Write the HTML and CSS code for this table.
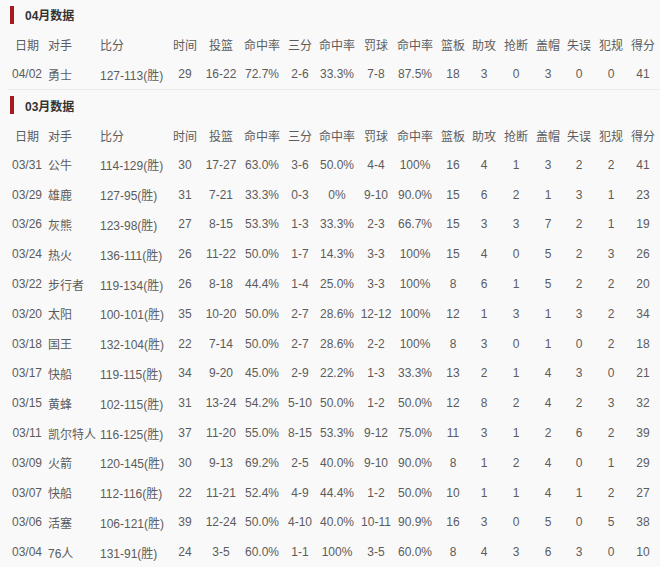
FILE: index.html
```html
<!DOCTYPE html>
<html lang="zh-CN">
<head>
<meta charset="utf-8">
<title>月度数据</title>
<link rel="stylesheet" href="styles.css">
</head>
<body>
<div class="page">
  <section class="month">
    <h2 class="month-title">04月数据</h2>
    <div class="stats">
      <div class="row head"><span>日期</span><span class="l">对手</span><span class="l">比分</span><span>时间</span><span>投篮</span><span>命中率</span><span>三分</span><span>命中率</span><span>罚球</span><span>命中率</span><span>篮板</span><span>助攻</span><span>抢断</span><span>盖帽</span><span>失误</span><span>犯规</span><span>得分</span></div>
      <div class="row"><span>04/02</span><span class="l">勇士</span><span class="l">127-113(胜)</span><span>29</span><span>16-22</span><span>72.7%</span><span>2-6</span><span>33.3%</span><span>7-8</span><span>87.5%</span><span>18</span><span>3</span><span>0</span><span>3</span><span>0</span><span>0</span><span>41</span></div>
    </div>
  </section>
  <section class="month">
    <h2 class="month-title">03月数据</h2>
    <div class="stats">
      <div class="row head"><span>日期</span><span class="l">对手</span><span class="l">比分</span><span>时间</span><span>投篮</span><span>命中率</span><span>三分</span><span>命中率</span><span>罚球</span><span>命中率</span><span>篮板</span><span>助攻</span><span>抢断</span><span>盖帽</span><span>失误</span><span>犯规</span><span>得分</span></div>
      <div class="row"><span>03/31</span><span class="l">公牛</span><span class="l">114-129(胜)</span><span>30</span><span>17-27</span><span>63.0%</span><span>3-6</span><span>50.0%</span><span>4-4</span><span>100%</span><span>16</span><span>4</span><span>1</span><span>3</span><span>2</span><span>2</span><span>41</span></div>
      <div class="row"><span>03/29</span><span class="l">雄鹿</span><span class="l">127-95(胜)</span><span>31</span><span>7-21</span><span>33.3%</span><span>0-3</span><span>0%</span><span>9-10</span><span>90.0%</span><span>15</span><span>6</span><span>2</span><span>1</span><span>3</span><span>1</span><span>23</span></div>
      <div class="row"><span>03/26</span><span class="l">灰熊</span><span class="l">123-98(胜)</span><span>27</span><span>8-15</span><span>53.3%</span><span>1-3</span><span>33.3%</span><span>2-3</span><span>66.7%</span><span>15</span><span>3</span><span>3</span><span>7</span><span>2</span><span>1</span><span>19</span></div>
      <div class="row"><span>03/24</span><span class="l">热火</span><span class="l">136-111(胜)</span><span>26</span><span>11-22</span><span>50.0%</span><span>1-7</span><span>14.3%</span><span>3-3</span><span>100%</span><span>15</span><span>4</span><span>0</span><span>5</span><span>2</span><span>3</span><span>26</span></div>
      <div class="row"><span>03/22</span><span class="l">步行者</span><span class="l">119-134(胜)</span><span>26</span><span>8-18</span><span>44.4%</span><span>1-4</span><span>25.0%</span><span>3-3</span><span>100%</span><span>8</span><span>6</span><span>1</span><span>5</span><span>2</span><span>2</span><span>20</span></div>
      <div class="row"><span>03/20</span><span class="l">太阳</span><span class="l">100-101(胜)</span><span>35</span><span>10-20</span><span>50.0%</span><span>2-7</span><span>28.6%</span><span>12-12</span><span>100%</span><span>12</span><span>1</span><span>3</span><span>1</span><span>3</span><span>2</span><span>34</span></div>
      <div class="row"><span>03/18</span><span class="l">国王</span><span class="l">132-104(胜)</span><span>22</span><span>7-14</span><span>50.0%</span><span>2-7</span><span>28.6%</span><span>2-2</span><span>100%</span><span>8</span><span>3</span><span>0</span><span>1</span><span>0</span><span>2</span><span>18</span></div>
      <div class="row"><span>03/17</span><span class="l">快船</span><span class="l">119-115(胜)</span><span>34</span><span>9-20</span><span>45.0%</span><span>2-9</span><span>22.2%</span><span>1-3</span><span>33.3%</span><span>13</span><span>2</span><span>1</span><span>4</span><span>3</span><span>0</span><span>21</span></div>
      <div class="row"><span>03/15</span><span class="l">黄蜂</span><span class="l">102-115(胜)</span><span>31</span><span>13-24</span><span>54.2%</span><span>5-10</span><span>50.0%</span><span>1-2</span><span>50.0%</span><span>12</span><span>8</span><span>2</span><span>4</span><span>2</span><span>3</span><span>32</span></div>
      <div class="row"><span>03/11</span><span class="l">凯尔特人</span><span class="l">116-125(胜)</span><span>37</span><span>11-20</span><span>55.0%</span><span>8-15</span><span>53.3%</span><span>9-12</span><span>75.0%</span><span>11</span><span>3</span><span>1</span><span>2</span><span>6</span><span>2</span><span>39</span></div>
      <div class="row"><span>03/09</span><span class="l">火箭</span><span class="l">120-145(胜)</span><span>30</span><span>9-13</span><span>69.2%</span><span>2-5</span><span>40.0%</span><span>9-10</span><span>90.0%</span><span>8</span><span>1</span><span>2</span><span>4</span><span>0</span><span>1</span><span>29</span></div>
      <div class="row"><span>03/07</span><span class="l">快船</span><span class="l">112-116(胜)</span><span>22</span><span>11-21</span><span>52.4%</span><span>4-9</span><span>44.4%</span><span>1-2</span><span>50.0%</span><span>10</span><span>1</span><span>1</span><span>4</span><span>1</span><span>2</span><span>27</span></div>
      <div class="row"><span>03/06</span><span class="l">活塞</span><span class="l">106-121(胜)</span><span>39</span><span>12-24</span><span>50.0%</span><span>4-10</span><span>40.0%</span><span>10-11</span><span>90.9%</span><span>16</span><span>3</span><span>0</span><span>5</span><span>0</span><span>5</span><span>38</span></div>
      <div class="row"><span>03/04</span><span class="l">76人</span><span class="l">131-91(胜)</span><span>24</span><span>3-5</span><span>60.0%</span><span>1-1</span><span>100%</span><span>3-5</span><span>60.0%</span><span>8</span><span>4</span><span>3</span><span>6</span><span>3</span><span>0</span><span>10</span></div>
    </div>
  </section>
</div>
</body>
</html>
```

FILE: styles.css
```css
html, body {
  margin: 0;
  padding: 0;
  background: #f9f9f9;
}

body {
  font-family: "Liberation Sans", Arial, "Noto Sans CJK SC", sans-serif;
  font-size: 12px;
  color: #5c5c5c;
}

.page {
  padding-left: 8px;
}

.month + .month {
  border-top: 1px solid #ececec;
}

.month-title {
  margin: 0;
  height: 29.8px;
  display: flex;
  align-items: center;
  padding-left: 2px;
  font-size: 12px;
  font-weight: bold;
  color: #333;
}

.month-title::before {
  content: "";
  width: 4px;
  height: 18px;
  background: #a51c20;
  margin-right: 11px;
}

.row {
  display: grid;
  grid-template-columns: 36px 52px 72px 34px 38px 44px 32px 42px 36px 42px 34px 28px 36px 28px 34px 30px 34px;
  height: 29.8px;
  align-items: center;
  white-space: nowrap;
}

.row span {
  text-align: center;
}

.row span.l {
  text-align: left;
  padding-left: 4px;
}

.row > span:first-child {
  padding-left: 2px;
}
```
